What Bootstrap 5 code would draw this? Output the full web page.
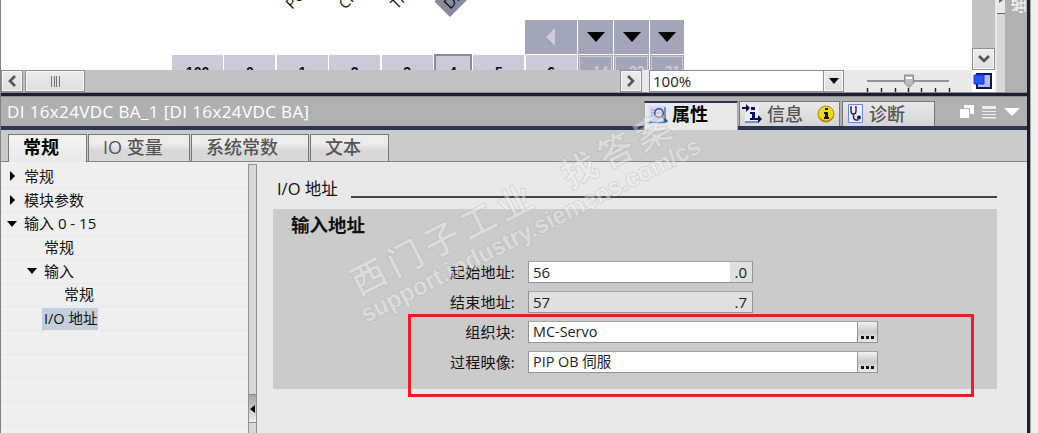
<!DOCTYPE html>
<html lang="zh-CN">
  <head>
    <meta charset="UTF-8" />
    <meta name="viewport" content="width=device-width, initial-scale=1.0" />
    <title>DI 16x24VDC BA_1</title>
    <link
      rel="stylesheet"
      href="https://cdn.jsdelivr.net/npm/bootstrap@5.3.0/dist/css/bootstrap.min.css"
    />
    <style>
      body {
        font-family: "Open Sans", "Noto Sans CJK SC", sans-serif;
        font-size: 15px;
        line-height: 1;
        color: #111;
        background: #efefef;
      }
      svg { display: block; flex: none; }
      .app {
        width: 1031px;
        height: 433px;
        border-left: 1px solid #82828f;
        border-right: 1px solid #a5a6ad;
      }
      .main-area { width: 1026px; background: #e9e9e9; }
      .edge { width: 3px; background: #1b2030; }

      /* device view */
      .top-area { height: 92px; }
      .device { width: 971px; height: 70px; }
      .slot-label {
        position: absolute;
        font-size: 15px;
        font-weight: 500;
        transform: rotate(-45deg);
        transform-origin: 0 100%;
        line-height: 17px;
      }
      .slot-label.on {
        background: #868c9c;
        height: 22px;
        width: 50px;
        line-height: 22px;
        padding-left: 5px;
      }
      .nav-row { margin-left: 524px; padding-top: 20px; gap: 1px; height: 54px; }
      .nav-row > div {
        width: 35px;
        background: #a3a5b8;
        display: flex;
        align-items: center;
        justify-content: center;
      }
      .nav-row > div:first-child { width: 52px; }
      .nav-row > div:last-child { width: 34px; }
      .slot-row {
        margin-left: 171px;
        margin-top: 1px;
        gap: 1.3px;
        font-family: "Liberation Sans", sans-serif;
        font-weight: bold;
        font-size: 14px;
      }
      .slot {
        width: 51.1px;
        height: 30px;
        flex: none;
        padding-top: 10px;
        text-align: center;
        background: #cacbd9;
      }
      .slot.picked {
        width: 38px;
        margin-top: -1px;
        padding-top: 9px;
        border: 2px solid #868c9c;
      }
      .slot.rail {
        width: 34.6px;
        padding: 9px 4px 0 0;
        text-align: right;
        color: #cacbd9;
        background: #a3a5b8;
        box-shadow: inset 0 0 0 1px #a3a5b8, inset 0 0 0 2px #cacbd9;
      }
      .v-bar { width: 23px; background: #c2c2c2; }
      .sb-btn {
        height: 22px;
        border: 1px solid #8f8f8f;
        box-shadow: inset 0 0 0 1px #f8f8f8;
        background: linear-gradient(#ececec, #dedede);
        display: flex;
        align-items: center;
        justify-content: center;
      }
      .h-bar { height: 22px; }
      .h-track { width: 641px; background: #c2c2c2; gap: 2px; }
      .grip { width: 9px; height: 11px; background: repeating-linear-gradient(90deg, #777 0 1px, #ddd 1px 2.66px); }
      .zoom-box {
        width: 195px;
        height: 22px;
        margin-left: 7px;
        border: 1px solid #8f8f8f;
        background: #fff;
        color: #222;
      }
      .split-v { width: 8px; margin-left: 2px; background: #d8d8d8; }
      .side-strip { width: 22px; background: #b0b0b0; }

      /* title bar */
      .rule-dark { height: 5px; background: #1b2030; border-top: 1px solid #8f8f8f; border-bottom: 1px solid #8f8f8f; }
      .title-bar { height: 33px; background: #b0b0b0; border-bottom: 4px solid #2b3650; }
      .title-text { width: 643px; padding-left: 6px; color: #fff; font-size: 17px; font-weight: 500; letter-spacing: .38px; line-height: 29px; }
      .view-tab {
        height: 25px;
        margin-top: 4px;
        color: #555;
        font-size: 18px;
        font-weight: 500;
        border: 1px solid #777;
        border-bottom: 0;
        background: linear-gradient(#e8e8e8, #d5d5d5);
      }
      .view-tab.on {
        height: 29px;
        color: #000;
        font-weight: bold;
        border-color: #2b3650 #aaa #e9e9e9;
        border-top-width: 2px;
        background: #e9e9e9;
        padding-bottom: 5px;
      }
      .win-tools { margin-left: 24px; height: 29px; }

      /* property tabs */
      .prop-tabs { height: 32px; background: #cbcbcb; border-bottom: 1px solid #858585; padding: 4px 0 0 7px; gap: 1px; }
      .prop-tab {
        height: 27px;
        padding: 0 0 1px 14px;
        font-size: 18px;
        font-weight: 500;
        line-height: 25px;
        color: #555;
        border: 1px solid #777;
        border-bottom: 0;
        background: linear-gradient(#ececec 0 35%, #d8d8d8 60%);
      }
      .prop-tab.on { height: 28px; color: #000; font-weight: bold; background: linear-gradient(#f4f4f4, #e9e9e9); }

      /* tree */
      .tree { width: 247px; padding-top: 3px; background: #efefef; }
      .tree-row { height: 23.72px; padding-left: 6px; border-bottom: 1px solid #e7e7e7; flex: none; }
      .tree-row .twist { width: 17px; }
      .lv-1 { padding-left: 26px; }
      .lv-2 { padding-left: 46px; }
      .picked-node { height: 22px; width: 56px; line-height: 22px; margin-left: -5px; padding-left: 2px; font-size: 14.5px; white-space: nowrap; background: #c5cfda; }
      .splitter { width: 9px; margin-top: 2px; background: #d8d8d8; border-left: 1.5px solid #929292; border-right: 1px solid #929292; border-top: 1px solid #929292; }
      .splitter-btn { height: 29px; margin-top: 229px; border: solid #8a8a8a; border-width: 1px 0; background: linear-gradient(#a5a5a5, #eee); }

      /* form */
      .form-side { padding: 17px 0 0 16px; width: 770px; }
      .sec-title { width: 724px; height: 21px; font-size: 16.5px; padding-left: 4px; }
      .sec-line { height: 2px; background: #444; margin: 14px 0 0 13px; }
      .group-box { width: 724px; height: 180px; margin-top: 9px; padding-top: 7px; background: #cbcbcb; }
      .group-box h2 { font-size: 18.5px; font-weight: bold; margin: 0 0 27px 18px; line-height: 18px; }
      .f-row { height: 22px; margin-bottom: 8px; }
      .f-label { width: 255px; padding-right: 13px; text-align: right; letter-spacing: .2px; white-space: nowrap; }
      .f-box { width: 225px; height: 22px; border: 1.5px solid #949494; border-top-color: #a4a4a4; background: #fff; padding-left: 4px; color: #222; }
      .f-box.wide { width: 350px; font-size: 14.4px; }
      .f-box.locked, .f-box .bit { background: #e0e0e0; }
      .bit { width: 22px; height: 20px; line-height: 20px; padding-right: 5px; text-align: right; }
      .more { width: 20px; height: 20px; border-left: 1px solid #999; background: linear-gradient(#f2f2f2, #c9c9c9 50%, #e8e8e8); display: flex; align-items: end; justify-content: center; gap: 2px; padding-bottom: 3px; }
      .more i { width: 3px; height: 3px; background: #111; }
      .marker { position: absolute; left: 408px; top: 314px; width: 566px; height: 83px; border: 3px solid #ee1c24; }
      .watermark { position: absolute; left: 0; top: 0; pointer-events: none; }
    </style>
  </head>
  <body class="overflow-hidden position-relative">
    <div class="app d-flex">
      <div class="main-area d-flex flex-column">
        <div class="top-area d-flex">
          <div class="d-flex flex-column">
            <div class="d-flex">
              <div class="device bg-white overflow-hidden position-relative">
                <span class="slot-label" style="left: 293px; top: -5px">PC</span>
                <span class="slot-label" style="left: 346px; top: -5px">CPU</span>
                <span class="slot-label" style="left: 398px; top: -5px">Th</span>
                <span class="slot-label on" style="left: 449px; top: -5px">DI</span>
                <div class="nav-row d-flex">
                  <div><svg width="10" height="18"><path d="M9 0v18L0 9z" fill="#cacbd9" /></svg></div>
                  <div><svg width="18" height="10"><path d="M0 0h18L9 10z" /></svg></div>
                  <div><svg width="18" height="10"><path d="M0 0h18L9 10z" /></svg></div>
                  <div><svg width="18" height="10"><path d="M0 0h18L9 10z" /></svg></div>
                </div>
                <div class="slot-row d-flex">
                  <div class="slot">100</div>
                  <div class="slot">0</div>
                  <div class="slot">1</div>
                  <div class="slot">2</div>
                  <div class="slot">3</div>
                  <div class="slot picked">4</div>
                  <div class="slot">5</div>
                  <div class="slot">6</div>
                  <div class="slot rail">14</div>
                  <div class="slot rail">22</div>
                  <div class="slot rail">31</div>
                </div>
              </div>
              <div class="v-bar d-flex flex-column justify-content-end">
                <div class="sb-btn">
                  <svg width="12" height="8"><path d="M1 1l5 5 5-5" fill="none" stroke="#555" stroke-width="2.6" /></svg>
                </div>
              </div>
            </div>
            <div class="h-bar d-flex">
              <div class="h-track d-flex">
                <div class="sb-btn" style="width: 22px">
                  <svg width="8" height="12"><path d="M7 1L2 6l5 5" fill="none" stroke="#555" stroke-width="2.6" /></svg>
                </div>
                <div class="sb-btn" style="width: 60px"><div class="grip"></div></div>
                <div class="sb-btn ms-auto" style="width: 22px">
                  <svg width="8" height="12"><path d="M1 1l5 5-5 5" fill="none" stroke="#555" stroke-width="2.6" /></svg>
                </div>
              </div>
              <div class="zoom-box d-flex align-items-center justify-content-between">
                <span style="font-size: 15px; padding-left: 3px">100%</span>
                <div class="sb-btn" style="width: 20px; height: 20px; border-width: 0 0 0 1px">
                  <svg width="10" height="6"><path d="M0 0h10L5 6z" /></svg>
                </div>
              </div>
              <svg width="128" height="22">
                <path d="M23 11h82" stroke="#777" stroke-width="1.4" />
                <path d="M23.500 18v4M37.500 18v4M51.500 18v4M64.500 18v4M77.500 18v4M91.500 18v4M105.500 18v4" stroke="#222" stroke-width="1.4" />
                <path d="M60.500 5h9v8l-4.500 4.500-4.500-4.500z" fill="#bbb" stroke="#888" />
                <path d="M62 7h6v2h-6z" fill="#fff" />
              </svg>
              <svg width="23" height="22" style="background: #fff">
                <path d="M5 4h14v14H5z" fill="#b3bedd" stroke="#0b1560" stroke-width="2" />
                <path d="M2 5h10v9H2z" fill="#2858f0" stroke="#1030ff" />
              </svg>
            </div>
          </div>
          <div class="split-v d-flex flex-column">
            <svg width="8" height="14"><path d="M0 0h8v13H0z" fill="#e8e8e8" /><path d="M2 0h4L2 3zM0 13h8v1H0z" fill="#666" /></svg>
          </div>
          <div class="side-strip flex-fill">
            <svg width="22" height="14"><path d="M8 0v6M12 0v11M16 0v9M20 0v12M7 1h4M13 3h8M6 5h8M9 8h12M7 10h5M14 12h4" stroke="#f4f4f4" stroke-width="1.3" /></svg>
          </div>
        </div>

        <div class="rule-dark"></div>
        <div class="title-bar d-flex">
          <div class="title-text text-nowrap">DI 16x24VDC BA_1 [DI 16x24VDC BA]</div>
          <div class="view-tab on d-flex align-items-center" style="width: 94px; margin-right: 1px; padding-left: 3px">
            <svg width="20" height="19" class="me-1">
              <path d="M1 1h16v16H1z" fill="#cfdcf8" /><path d="M1 17.500h16M17 2v15" stroke="#5570d8" stroke-width="1.5" />
              <path d="M3 5h5M3 8h3M3 11h5" stroke="#8899cc" />
              <circle cx="11" cy="8" r="4.300" fill="#c8dcf4" stroke="#44507c" stroke-width="1.500" />
              <path d="M14 11.500l2 2" stroke="#e0a020" stroke-width="2.500" /><path d="M16 14l3 3" stroke="#1c5ca8" stroke-width="3" />
            </svg>
            属性
          </div>
          <div class="view-tab d-flex align-items-center" style="width: 101px; margin-right: 2px; padding-left: 2px">
            <svg width="21" height="20" class="me-1">
              <path d="M3 1h14v17H3z" fill="#e8effd" /><path d="M3 18h14" stroke="#5570d8" stroke-width="1.5" />
              <path d="M0 4h5M14 15h5" stroke="#080860" stroke-width="2" /><path d="M4 0l4 4-4 4zM16 11l4 4-4 4z" fill="#080860" />
              <path d="M9 3h4v3H9zM8 8h5v6h1v2H8v-2h2v-4H8z" fill="#080860" />
            </svg>
            信息
            <svg width="18" height="18" style="margin-left: 14px">
              <circle cx="9" cy="9" r="8" fill="#f5d90c" stroke="#a58b20" /><path d="M2 12a8 8 0 0 0 14 0" fill="none" stroke="#b58b10" stroke-width="1.500" />
              <path d="M8 3h3v2H8zM7 7h4v5h1v2H7v-2h1V9H7z" fill="#111" />
            </svg>
          </div>
          <div class="view-tab d-flex align-items-center" style="width: 93px; padding-left: 5px">
            <svg width="16" height="20" style="margin-right: 5px">
              <path d="M.5.500h14v18H.5z" fill="#e8effd" stroke="#6f86e0" />
              <path d="M4 3H3v4q0 3 2.500 3T8 7V3H7M5.500 10v3q0 3 3 3h2" fill="none" stroke="#222850" stroke-width="1.400" /><circle cx="11" cy="13.500" r="2" fill="#111a40" />
            </svg>
            诊断
          </div>
          <div class="win-tools d-flex align-items-center">
            <svg width="62" height="16">
              <path d="M5 1h10v9H5z" fill="#fff" /><path d="M.5 4.500h10v10H.5z" fill="#fff" stroke="#b0b0b0" />
              <path d="M23 2h14v3H23zM23 7h14v1H23zM23 10h14v1H23zM23 13h14v1.500H23z" fill="#eee" />
              <path d="M45 4h16l-8 8z" fill="#fff" />
            </svg>
          </div>
        </div>

        <div class="prop-tabs d-flex">
          <div class="prop-tab on" style="width: 79px">常规</div>
          <div class="prop-tab" style="width: 102px">IO 变量</div>
          <div class="prop-tab" style="width: 118px">系统常数</div>
          <div class="prop-tab" style="width: 79px">文本</div>
        </div>

        <div class="d-flex flex-fill overflow-hidden">
          <div class="tree d-flex flex-column">
            <div class="tree-row d-flex align-items-center">
              <span class="twist"><svg width="10" height="10"><path d="M3 0v10l5-5z" /></svg></span>常规
            </div>
            <div class="tree-row d-flex align-items-center">
              <span class="twist"><svg width="10" height="10"><path d="M3 0v10l5-5z" /></svg></span>模块参数
            </div>
            <div class="tree-row d-flex align-items-center">
              <span class="twist"><svg width="10" height="6"><path d="M0 0h10L5 6z" /></svg></span>输入 0 - 15
            </div>
            <div class="tree-row lv-1 d-flex align-items-center"><span class="twist"></span>常规</div>
            <div class="tree-row lv-1 d-flex align-items-center">
              <span class="twist"><svg width="10" height="6"><path d="M0 0h10L5 6z" /></svg></span>输入
            </div>
            <div class="tree-row lv-2 d-flex align-items-center"><span class="twist"></span>常规</div>
            <div class="tree-row lv-2 d-flex align-items-center"><span class="picked-node">I/O 地址</span></div>
            <div class="tree-row"></div>
            <div class="tree-row"></div>
            <div class="tree-row"></div>
            <div class="tree-row"></div>
          </div>
          <div class="splitter">
            <div class="splitter-btn d-flex align-items-center justify-content-center">
              <svg width="5" height="8"><path d="M5 0v8L0 4z" /></svg>
            </div>
          </div>

          <div class="form-side">
            <div class="sec-title d-flex align-items-center text-nowrap">
              I/O 地址
              <div class="sec-line flex-fill"></div>
            </div>
            <div class="group-box">
              <h2>输入地址</h2>
              <div class="f-row d-flex align-items-center">
                <div class="f-label">起始地址:</div>
                <div class="f-box d-flex align-items-center justify-content-between">56<span class="bit">.0</span></div>
              </div>
              <div class="f-row d-flex align-items-center">
                <div class="f-label">结束地址:</div>
                <div class="f-box locked d-flex align-items-center justify-content-between">57<span class="bit">.7</span></div>
              </div>
              <div class="f-row d-flex align-items-center">
                <div class="f-label">组织块:</div>
                <div class="f-box wide d-flex align-items-center justify-content-between">MC-Servo<span class="more"><i></i><i></i><i></i></span></div>
              </div>
              <div class="f-row d-flex align-items-center">
                <div class="f-label">过程映像:</div>
                <div class="f-box wide d-flex align-items-center justify-content-between">PIP OB 伺服<span class="more"><i></i><i></i><i></i></span></div>
              </div>
            </div>
          </div>
        </div>
      </div>
      <div class="edge"></div>
    </div>

    <svg class="watermark" width="1038" height="433" opacity=".42" fill="#f2f2f2" stroke="#a8a8a8" stroke-width="1.4" paint-order="stroke">
      <g transform="translate(360 299) rotate(-27)" font-family="Noto Sans CJK SC, sans-serif" font-size="35" font-weight="500">
        <text x="0" y="-3" letter-spacing="6">西门子工业</text>
        <text x="237" y="-3" letter-spacing="6">找答案</text>
      </g>
      <text transform="translate(366 323) rotate(-27)" font-family="Liberation Sans, sans-serif" font-size="25" font-weight="bold" textLength="378" lengthAdjust="spacingAndGlyphs">support.industry.siemens.com/cs</text>
    </svg>
    <div class="marker"></div>
    <script src="https://cdn.jsdelivr.net/npm/bootstrap@5.3.0/dist/js/bootstrap.bundle.min.js"></script>
  </body>
</html>
